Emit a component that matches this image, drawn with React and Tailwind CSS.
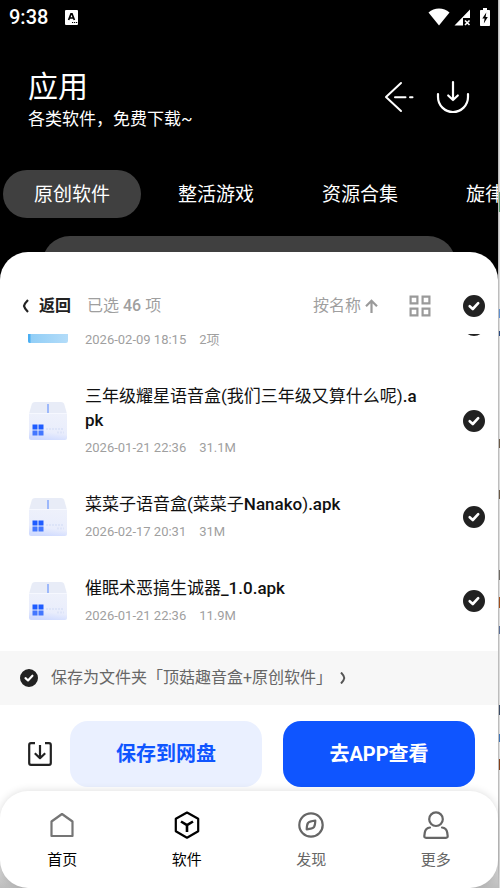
import React, { useState } from "react";

const TABS = ["原创软件", "整活游戏", "资源合集", "旋律音乐"];

const FILES = [
  { id: 1, type: "folder", name: "", date: "2026-02-09 18:15", size: "2项" },
  { id: 2, type: "apk", name: "三年级耀星语音盒(我们三年级又算什么呢).apk", date: "2026-01-21 22:36", size: "31.1M" },
  { id: 3, type: "apk", name: "菜菜子语音盒(菜菜子Nanako).apk", date: "2026-02-17 20:31", size: "31M" },
  { id: 4, type: "apk", name: "催眠术恶搞生诚器_1.0.apk", date: "2026-01-21 22:36", size: "11.9M" },
];

// slice of the window next to the phone: gap above, height, colour
const EDGE = [
  { gap: 192, h: 20, color: "#5a9a6e" },
  { gap: 97, h: 9, color: "#5f8fd0" },
  { gap: 13, h: 5, color: "#2a4a80" },
  { gap: 103, h: 9, color: "#6b5a48" },
  { gap: 42, h: 9, color: "#6b5a48" },
  { gap: 71, h: 10, color: "#6f6a64" },
  { gap: 17, h: 11, color: "#a14f1c" },
  { gap: 18, h: 8, color: "#5a6f96" },
  { gap: 71, h: 10, color: "#3c4c66" },
  { gap: 19, h: 8, color: "#3f74b5" },
  { gap: 17, h: 11, color: "#84401a" },
];

function StatusBar() {
  return (
    <div className="flex h-[34px] shrink-0 items-center pr-2 pl-[9px] text-white">
      <span className="text-[20px] leading-6 font-medium">9:38</span>
      <svg className="ml-[17px]" width="13" height="15" viewBox="0 0 13 15">
        <rect width="13" height="15" rx="1" fill="#fff" />
        <path d="M3.600 10L6 3.800H7L9.400 10M4.600 8H8.400" fill="none" stroke="#000" strokeWidth="1.700" />
        <path d="M7 12.500h1.200M9 12.500h1.200M11 12.500h1.200" stroke="#000" strokeWidth="1.200" />
      </svg>
      <div className="ml-auto flex items-center">
        <svg width="22" height="18" viewBox="0 0 22 18" fill="#fff">
          <path d="M0.5 4.600C3.500 1.900 7 .5 11 .5s7.500 1.400 10.500 4.100L11 17.500z" />
        </svg>
        <svg className="ml-1" width="17" height="17" viewBox="0 0 17 17">
          <path d="M16 .5V9H9v7.500H.5z" fill="#fff" />
          <path d="M11 11.500l4.500 4.500M15.500 11.500L11 16" stroke="#fff" strokeWidth="1.600" />
        </svg>
        <svg className="ml-[9px]" width="10" height="18" viewBox="0 0 10 18">
          <path d="M3 0h4v2h2.200q.8 0 .8.8V17.200q0 .8-.8.8H.8Q0 18 0 17.200V2.800Q0 2 .8 2H3z" fill="#fff" />
          <path d="M6.300 4.500L2.300 10.500H4.600L3.800 15.500L7.800 9H5.600z" fill="#000" />
        </svg>
      </div>
    </div>
  );
}

function AppHeader() {
  return (
    <header className="flex shrink-0 items-center justify-between px-7 pt-[33px] text-white">
      <div>
        <h1 className="text-[30px] leading-10">应用</h1>
        <p className="text-[17px] leading-6">各类软件，免费下载~</p>
      </div>
      <div className="mb-1 flex items-center gap-[22px]">
        <button aria-label="返回上一页">
          <svg width="30" height="32" viewBox="0 0 30 32" fill="none" stroke="#fff" strokeWidth="2" strokeLinecap="round" strokeLinejoin="round">
            <path d="M17 2L2 16L17 30M11 16.200h10.500M26 16.200h2.500" />
          </svg>
        </button>
        <button aria-label="下载">
          <svg width="34" height="34" viewBox="0 0 34 34" fill="none" stroke="#fff" strokeWidth="2.200" strokeLinecap="round" strokeLinejoin="round">
            <path d="M2 14v3a15 15 0 0 0 30 0v-3M17 2v18M12.200 15.500L17 20l4.800-4.500" />
          </svg>
        </button>
      </div>
    </header>
  );
}

function Tabs({ active, onChange }) {
  return (
    <div className="mt-[39px] flex shrink-0 gap-1.5 overflow-hidden pl-[3px]">
      {TABS.map((tab, i) => (
        <button
          key={tab}
          onClick={() => onChange(i)}
          className={`h-12 shrink-0 rounded-full px-[31px] pt-0.5 text-[19px] text-white ${i === active ? "bg-[#404040]" : ""}`}
        >
          {tab}
        </button>
      ))}
    </div>
  );
}

function Check({ label, checked, onChange, small }) {
  return (
    <span className={`relative block shrink-0 ${small ? "size-[18px]" : "size-[22px]"}`}>
      <input
        type="checkbox"
        aria-label={label}
        checked={checked}
        onChange={onChange}
        className="block size-full appearance-none rounded-full border-2 border-[#d0d0d0] checked:border-[#222] checked:bg-[#222]"
      />
      {checked && (
        <svg className="pointer-events-none absolute inset-0 size-full" viewBox="0 0 22 22" fill="none" stroke="#fff" strokeWidth="2.600" strokeLinecap="round" strokeLinejoin="round">
          <path d="M6.700 11.200L9.800 14L15.200 8.200" />
        </svg>
      )}
    </span>
  );
}

function FolderIcon() {
  return (
    <svg className="shrink-0" width="40" height="40" viewBox="0 0 40 40">
      <defs>
        <linearGradient id="folder" x1="0" x2="1">
          <stop offset="0" stopColor="#8fcdf6" />
          <stop offset="1" stopColor="#b3dcf9" />
        </linearGradient>
      </defs>
      <path d="M0 6q0-3 3-3h12l4 5h18q3 0 3 3v25q0 2-2 2H2q-2 0-2-2z" fill="url(#folder)" />
      <path d="M0 8h2.500v30H2q-2 0-2-2z" fill="#4aaef2" />
    </svg>
  );
}

function PackageIcon() {
  return (
    <svg className="shrink-0" width="40" height="40" viewBox="0 0 40 40">
      <defs>
        <linearGradient id="box" x1="0.700" y1="0" x2="0.500" y2="1">
          <stop offset="0" stopColor="#eef1fb" />
          <stop offset=".7" stopColor="#e9edfc" />
          <stop offset="1" stopColor="#d0dbff" />
        </linearGradient>
      </defs>
      <path d="M7 1h26q2.500 0 3.200 2L39 13H1L3.800 3Q4.500 1 7 1z" fill="#e8ecf7" />
      <path d="M1 12.500h38V37q0 2-2 2H3q-2 0-2-2z" fill="url(#box)" />
      <path d="M1 12.500h38" stroke="#f6f8ff" strokeWidth="1" />
      <path d="M20 3v9" stroke="#9db8fb" strokeWidth="2" />
      <path d="M4.500 23.500h5v5h-5zM10.500 23.500h5v5h-5z" fill="#1f5cff" />
      <path d="M4.500 29.500h5v5h-5zM10.500 29.500h5v5h-5z" fill="#4377ff" />
      <path d="M18 28h18M29 31.500h7" stroke="#dde4f8" strokeWidth="2" strokeDasharray="2 1" />
    </svg>
  );
}

// latin parts are drawn a bit heavier than the Chinese ones
function FileName({ name }) {
  return name.split(/([\w.]+)/).map((part, i) => (
    i % 2 ? <span key={i} className="font-medium">{part}</span> : part
  ));
}

function FileRow({ file, checked, onToggle }) {
  return (
    <li className="flex shrink-0 items-center py-[17px] pr-[13px] pl-7">
      {file.type === "folder" ? <FolderIcon /> : <PackageIcon />}
      <div className="mr-10 ml-[17px] min-w-0 flex-1">
        <p className="min-h-6 text-[17px] leading-6 break-all text-[#111]">
          <FileName name={file.name} />
        </p>
        <p className="mt-1.5 flex gap-[13px] text-[13px] leading-5 text-[#9f9f9f]">
          <span>{file.date}</span>
          <span>{file.size}</span>
        </p>
      </div>
      <Check label={file.name || "文件夹"} checked={checked} onChange={onToggle} />
    </li>
  );
}

function SheetHeader({ allChecked, onToggleAll }) {
  return (
    <div className="flex h-14 shrink-0 items-center pr-[13px] pl-[22px] text-[16px] text-[#9f9f9f]">
      <button className="flex items-center gap-2.5 font-bold text-[#222]">
        <svg width="7" height="14" viewBox="0 0 7 14" fill="none" stroke="#222" strokeWidth="2.200">
          <path d="M6 1Q2.500 4.500 2 7Q2.500 9.500 6 13" />
        </svg>
        返回
      </button>
      <span className="ml-4">
        已选 <span className="font-medium">46</span> 项
      </span>
      <button className="ml-auto flex items-center gap-1">
        按名称
        <svg width="13" height="14" viewBox="0 0 13 14" fill="none" stroke="#9a9a9a" strokeWidth="2.200">
          <path d="M6.500 14V2M1 7.200L6.500 1.700L12 7.200" />
        </svg>
      </button>
      <button className="ml-[31px]" aria-label="网格视图">
        <svg width="22" height="22" viewBox="0 0 22 22" fill="none" stroke="#9a9a9a" strokeWidth="2.200">
          <path d="M1.600 1.600h6.800v6.800H1.600zM13.600 1.600h6.800v6.800h-6.800zM1.600 13.600h6.800v6.800H1.600zM13.600 13.600h6.800v6.800h-6.800z" />
        </svg>
      </button>
      <div className="ml-8">
        <Check label="全选" checked={allChecked} onChange={onToggleAll} />
      </div>
    </div>
  );
}

function HomeIcon() {
  return (
    <svg width="28" height="28" viewBox="0 0 28 28" fill="none" stroke="#757575" strokeWidth="2.200" strokeLinejoin="round">
      <path d="M3.500 10.500L14 3l10.500 7.500V25H3.500z" />
    </svg>
  );
}

function SoftwareIcon() {
  return (
    <svg width="28" height="28" viewBox="0 0 28 28" fill="none" stroke="#000" strokeWidth="2.200" strokeLinejoin="round">
      <path d="M14 1.500L25.200 7.700V20.300L14 26.700L2.800 20.300V7.700z" />
      <path d="M8 10.500L14 14.200L20 10.500M14 14.200V21" strokeWidth="2.600" />
    </svg>
  );
}

function DiscoverIcon() {
  return (
    <svg width="28" height="28" viewBox="0 0 28 28" fill="none" stroke="#666" strokeWidth="2.200" strokeLinejoin="round">
      <circle cx="14" cy="14" r="11.700" />
      <path d="M18.300 9.700Q12.500 10.300 11 12Q9.900 13.500 9.700 18.300Q15.500 17.700 17 16Q18.100 14.500 18.300 9.700z" />
    </svg>
  );
}

function MoreIcon() {
  return (
    <svg width="28" height="28" viewBox="0 0 28 28" fill="none" stroke="#666" strokeWidth="2.200" strokeLinecap="round">
      <circle cx="14" cy="8.200" r="6.800" />
      <path d="M8 16.500Q3.500 17 2.800 21.500L2.300 25Q2.200 26.800 4 26.800H24Q25.800 26.800 25.700 25L25.200 21.500Q24.500 17 20 16.500" />
    </svg>
  );
}

const NAV = [
  { label: "首页", icon: HomeIcon, color: "text-black" },
  { label: "软件", icon: SoftwareIcon, color: "text-black" },
  { label: "发现", icon: DiscoverIcon, color: "text-[#666]" },
  { label: "更多", icon: MoreIcon, color: "text-[#666]" },
];

function BottomNav() {
  return (
    <div className="shrink-0 bg-linear-to-b from-white from-50% to-[#bdbdbd]">
      <nav className="flex rounded-[28px] bg-white pt-5 pb-4 shadow-[0_0_8px_rgba(0,0,0,0.14)]">
        {NAV.map(({ label, icon: Icon, color }) => (
          <a key={label} href="#" className={`flex flex-1 flex-col items-center gap-[9px] text-[15px] leading-6 ${color}`}>
            <Icon />
            {label}
          </a>
        ))}
      </nav>
    </div>
  );
}

export default function App() {
  const [tab, setTab] = useState(0);
  const [selected, setSelected] = useState(FILES.map(f => f.id));
  const [asFolder, setAsFolder] = useState(true);

  const allChecked = selected.length === FILES.length;

  const toggle = (id) => {
    setSelected(prev => (prev.includes(id) ? prev.filter(x => x !== id) : [...prev, id]));
  };

  return (
    <div className="flex h-screen overflow-hidden bg-[#dcdcdc] font-[Roboto,'Noto_Sans_CJK_SC',sans-serif]">
      <div className="flex min-w-0 flex-1 flex-col bg-black">
        <StatusBar />
        <AppHeader />
        <Tabs active={tab} onChange={setTab} />

        <div className="mx-[42px] mt-[18px] h-11 shrink-0 rounded-t-[28px] bg-[#404040]" />

        <section className="relative -mt-7 flex min-h-0 flex-1 flex-col rounded-t-[28px] bg-white pt-[26px]">
          <SheetHeader allChecked={allChecked} onToggleAll={() => setSelected(allChecked ? [] : FILES.map(f => f.id))} />

          <ul className="flex min-h-0 flex-1 flex-col justify-end overflow-hidden pb-2">
            {FILES.map(f => (
              <FileRow key={f.id} file={f} checked={selected.includes(f.id)} onToggle={() => toggle(f.id)} />
            ))}
          </ul>

          <div className="flex h-[54px] shrink-0 items-center bg-[#f7f7f7] pl-5 text-[16px] text-[#666]">
            <Check small label="保存为文件夹" checked={asFolder} onChange={() => setAsFolder(!asFolder)} />
            <button className="ml-[13px] flex items-center gap-2">
              保存为文件夹「顶菇趣音盒+原创软件」
              <svg width="6" height="12" viewBox="0 0 6 12" fill="none" stroke="#555" strokeWidth="2">
                <path d="M1 .5Q4 3.500 4.300 6Q4 8.500 1 11.500" />
              </svg>
            </button>
          </div>

          <div className="flex shrink-0 items-center pt-4 pr-[23px] pb-1 pl-7">
            <button aria-label="下载到本地">
              <svg width="24" height="24" viewBox="0 0 24 24" fill="none" stroke="#222" strokeWidth="2.200" strokeLinejoin="round">
                <path d="M7 1.200H3Q1.200 1.200 1.200 3V21Q1.200 22.800 3 22.800H21Q22.800 22.800 22.800 21V3Q22.800 1.200 21 1.200H17M12 3v13M6.800 11.200L12 16.200L17.200 11.200" />
              </svg>
            </button>
            <div className="ml-[18px] flex flex-1 gap-[21px]">
              <button className="h-[66px] flex-1 rounded-[18px] bg-[#eaf0ff] text-[20px] font-bold text-[#0f55ff]">保存到网盘</button>
              <button className="h-[66px] flex-1 rounded-[18px] bg-[#0f55ff] text-[20px] font-bold text-white">去APP查看</button>
            </div>
          </div>

          <BottomNav />
        </section>
      </div>

      <div className="w-0.5 shrink-0 border-l border-[#bdbdbd]">
        {EDGE.map((e, i) => (
          <div key={i} style={{ marginTop: e.gap, height: e.h, background: e.color }} />
        ))}
      </div>
    </div>
  );
}
